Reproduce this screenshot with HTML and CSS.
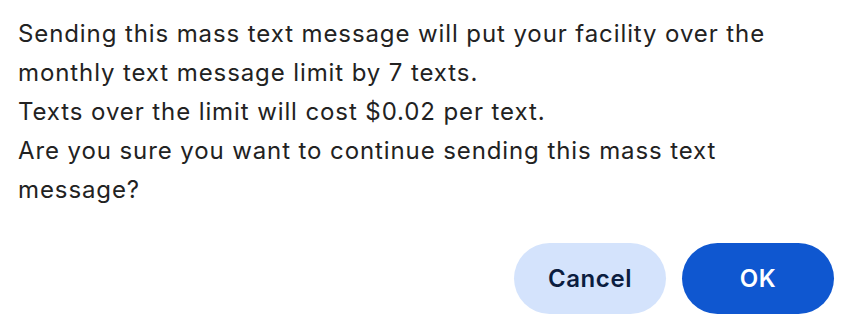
FILE: index.html
```html
<!DOCTYPE html>
<html>
<head>
<meta charset="utf-8">
<link rel="stylesheet" href="styles.css">
</head>
<body>
<div class="dialog">
  <p class="message">Sending this mass text message will put your facility over the monthly text message limit by 7 texts.<br>Texts over the limit will cost $0.02 per text.<br>Are you sure you want to continue sending this mass text message?</p>
  <div class="actions">
    <button class="btn btn-secondary">Cancel</button>
    <button class="btn btn-primary">OK</button>
  </div>
</div>
</body>
</html>
```
FILE: styles.css
```css
html, body {
  margin: 0;
  padding: 0;
  background: #ffffff;
}
.dialog {
  width: 852px;
  height: 333px;
  box-sizing: border-box;
  padding: 14px 18px 0 18px;
  font-family: Inter, "Noto Sans", sans-serif;
}
.message {
  margin: 0;
  max-width: 790px;
  font-size: 24px;
  letter-spacing: 0.9px;
  line-height: 39px;
  color: #222222;
}
.actions {
  display: flex;
  justify-content: flex-end;
  gap: 16px;
  margin-top: 34px;
}
.btn {
  width: 152px;
  height: 71px;
  border: none;
  border-radius: 36px;
  font-family: Inter, "Noto Sans", sans-serif;
  font-size: 24px;
  letter-spacing: 0.6px;
  font-weight: 600;
  cursor: pointer;
}
.btn-secondary {
  background: #d4e3fc;
  color: #0b1d3f;
}
.btn-primary {
  background: #0f57d0;
  color: #ffffff;
}
```
